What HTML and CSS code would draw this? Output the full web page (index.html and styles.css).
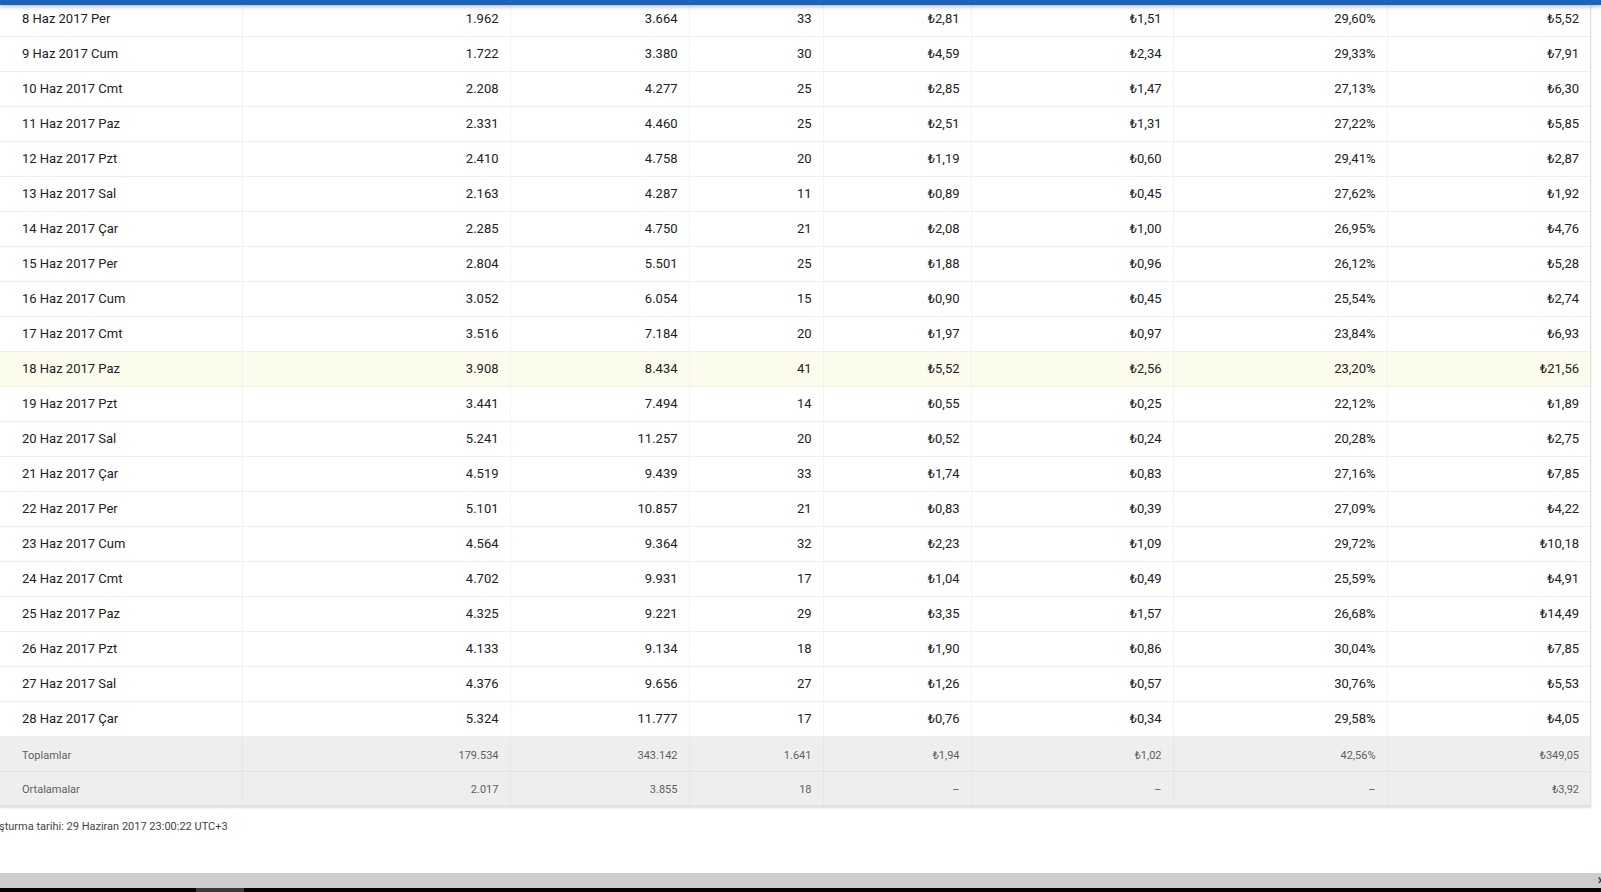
FILE: index.html
```html
<!DOCTYPE html>
<html lang="tr">
<head>
<meta charset="utf-8">
<title>Rapor</title>
<link rel="stylesheet" href="styles.css">
</head>
<body>
<div class="topbar"></div>
<div class="page">
  <main class="content">
    <div class="card">
      <table class="report">
        <colgroup>
          <col class="c1"><col class="c2"><col class="c3"><col class="c4"><col class="c5"><col class="c6"><col class="c7"><col class="c8">
        </colgroup>
        <tbody>
          <tr><td>8 Haz 2017 Per</td><td>1.962</td><td>3.664</td><td>33</td><td>₺2,81</td><td>₺1,51</td><td>29,60%</td><td>₺5,52</td></tr>
          <tr><td>9 Haz 2017 Cum</td><td>1.722</td><td>3.380</td><td>30</td><td>₺4,59</td><td>₺2,34</td><td>29,33%</td><td>₺7,91</td></tr>
          <tr><td>10 Haz 2017 Cmt</td><td>2.208</td><td>4.277</td><td>25</td><td>₺2,85</td><td>₺1,47</td><td>27,13%</td><td>₺6,30</td></tr>
          <tr><td>11 Haz 2017 Paz</td><td>2.331</td><td>4.460</td><td>25</td><td>₺2,51</td><td>₺1,31</td><td>27,22%</td><td>₺5,85</td></tr>
          <tr><td>12 Haz 2017 Pzt</td><td>2.410</td><td>4.758</td><td>20</td><td>₺1,19</td><td>₺0,60</td><td>29,41%</td><td>₺2,87</td></tr>
          <tr><td>13 Haz 2017 Sal</td><td>2.163</td><td>4.287</td><td>11</td><td>₺0,89</td><td>₺0,45</td><td>27,62%</td><td>₺1,92</td></tr>
          <tr><td>14 Haz 2017 Çar</td><td>2.285</td><td>4.750</td><td>21</td><td>₺2,08</td><td>₺1,00</td><td>26,95%</td><td>₺4,76</td></tr>
          <tr><td>15 Haz 2017 Per</td><td>2.804</td><td>5.501</td><td>25</td><td>₺1,88</td><td>₺0,96</td><td>26,12%</td><td>₺5,28</td></tr>
          <tr><td>16 Haz 2017 Cum</td><td>3.052</td><td>6.054</td><td>15</td><td>₺0,90</td><td>₺0,45</td><td>25,54%</td><td>₺2,74</td></tr>
          <tr><td>17 Haz 2017 Cmt</td><td>3.516</td><td>7.184</td><td>20</td><td>₺1,97</td><td>₺0,97</td><td>23,84%</td><td>₺6,93</td></tr>
          <tr class="hl"><td>18 Haz 2017 Paz</td><td>3.908</td><td>8.434</td><td>41</td><td>₺5,52</td><td>₺2,56</td><td>23,20%</td><td>₺21,56</td></tr>
          <tr><td>19 Haz 2017 Pzt</td><td>3.441</td><td>7.494</td><td>14</td><td>₺0,55</td><td>₺0,25</td><td>22,12%</td><td>₺1,89</td></tr>
          <tr><td>20 Haz 2017 Sal</td><td>5.241</td><td>11.257</td><td>20</td><td>₺0,52</td><td>₺0,24</td><td>20,28%</td><td>₺2,75</td></tr>
          <tr><td>21 Haz 2017 Çar</td><td>4.519</td><td>9.439</td><td>33</td><td>₺1,74</td><td>₺0,83</td><td>27,16%</td><td>₺7,85</td></tr>
          <tr><td>22 Haz 2017 Per</td><td>5.101</td><td>10.857</td><td>21</td><td>₺0,83</td><td>₺0,39</td><td>27,09%</td><td>₺4,22</td></tr>
          <tr><td>23 Haz 2017 Cum</td><td>4.564</td><td>9.364</td><td>32</td><td>₺2,23</td><td>₺1,09</td><td>29,72%</td><td>₺10,18</td></tr>
          <tr><td>24 Haz 2017 Cmt</td><td>4.702</td><td>9.931</td><td>17</td><td>₺1,04</td><td>₺0,49</td><td>25,59%</td><td>₺4,91</td></tr>
          <tr><td>25 Haz 2017 Paz</td><td>4.325</td><td>9.221</td><td>29</td><td>₺3,35</td><td>₺1,57</td><td>26,68%</td><td>₺14,49</td></tr>
          <tr><td>26 Haz 2017 Pzt</td><td>4.133</td><td>9.134</td><td>18</td><td>₺1,90</td><td>₺0,86</td><td>30,04%</td><td>₺7,85</td></tr>
          <tr><td>27 Haz 2017 Sal</td><td>4.376</td><td>9.656</td><td>27</td><td>₺1,26</td><td>₺0,57</td><td>30,76%</td><td>₺5,53</td></tr>
          <tr><td>28 Haz 2017 Çar</td><td>5.324</td><td>11.777</td><td>17</td><td>₺0,76</td><td>₺0,34</td><td>29,58%</td><td>₺4,05</td></tr>
          <tr class="sum"><td>Toplamlar</td><td>179.534</td><td>343.142</td><td>1.641</td><td>₺1,94</td><td>₺1,02</td><td>42,56%</td><td>₺349,05</td></tr>
          <tr class="sum"><td>Ortalamalar</td><td>2.017</td><td>3.855</td><td>18</td><td>–</td><td>–</td><td>–</td><td>₺3,92</td></tr>
        </tbody>
      </table>
    </div>
    <p class="created">şturma tarihi: 29 Haziran 2017 23:00:22 UTC+3</p>
  </main>
  <div class="hscroll"><span class="arrow">›</span></div>
  <div class="strip"><span class="thumb"></span></div>
</div>
</body>
</html>
```

FILE: styles.css
```css
* { box-sizing: border-box; }

html, body {
  margin: 0;
  padding: 0;
  width: 1601px;
  height: 892px;
  overflow: hidden;
  background: #ffffff;
  font-family: Roboto, "Liberation Sans", Arial, sans-serif;
  color: #212121;
}

.topbar {
  position: absolute;
  top: 0;
  left: 0;
  width: 1601px;
  height: 5px;
  background: #1a64bd;
  box-shadow: 0 1px 5px rgba(0, 0, 0, 0.35);
  z-index: 5;
}

.page {
  display: flex;
  flex-direction: column;
  height: 892px;
}

.content {
  flex: 1;
  padding-top: 1px;
}

.card {
  width: 1591px;
  border-right: 1px solid #e2e2e2;
  box-shadow: 0 1px 2px rgba(0, 0, 0, 0.14);
}

.report {
  width: 1590px;
  table-layout: fixed;
  border-collapse: collapse;
  font-size: 13px;
}

.c1 { width: 242px; }
.c2 { width: 268px; }
.c3 { width: 179px; }
.c4 { width: 134px; }
.c5 { width: 148px; }
.c6 { width: 202px; }
.c7 { width: 214px; }
.c8 { width: 203px; }

.report tr {
  height: 35px;
}

.report td {
  padding: 0 11px 0 0;
  text-align: right;
  vertical-align: middle;
  white-space: nowrap;
  border-bottom: 1px solid #eeeeee;
  border-right: 1px solid #f3f3f3;
  color: #212121;
}

.report td:first-child {
  text-align: left;
  padding: 0 0 0 22px;
}

.report td:last-child {
  border-right: none;
}

.report tr.hl td {
  background: #fcfced;
}

.report tr.sum td {
  background: #eeeeee;
  color: #5f5f5f;
  font-size: 11px;
  padding-top: 3px;
  border-bottom: 1px solid #e3e3e3;
  border-right-color: #e6e6e6;
}

.report tr.sum:last-child td {
  border-bottom: 2px solid #e2e2e2;
}

.created {
  margin: 12px 0 0 -1px;
  font-size: 11px;
  line-height: 16px;
  color: #444444;
}

.hscroll {
  height: 15px;
  background: #cdcdcd;
  position: relative;
}

.arrow {
  position: absolute;
  right: -1px;
  top: -2px;
  font-size: 14px;
  font-weight: bold;
  color: #222;
}

.strip {
  height: 4px;
  background: #050505;
  display: flex;
}

.thumb {
  margin-left: 196px;
  width: 48px;
  height: 4px;
  background: #3b3b3d;
}
```
